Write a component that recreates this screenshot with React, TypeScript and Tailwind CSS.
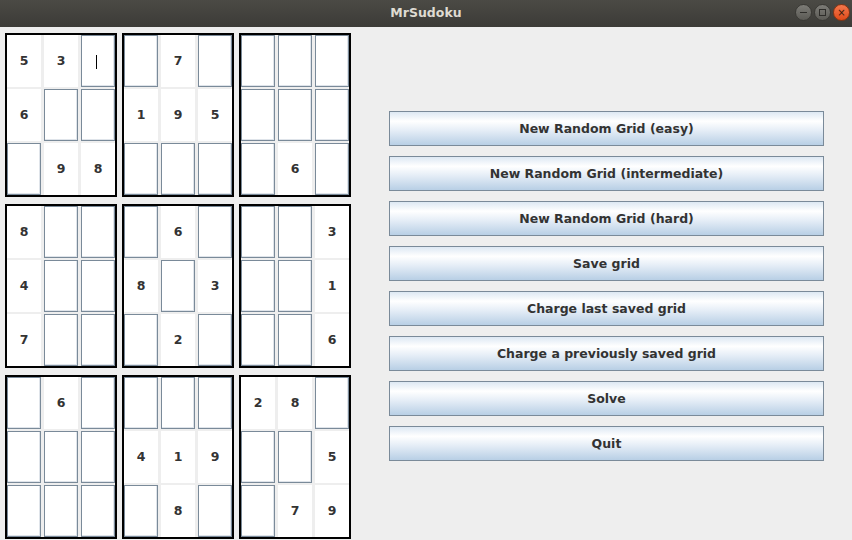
import React from "react";

type Cell = number | null | "caret";

const boxes: Cell[][] = [
  [5, 3, "caret", 6, null, null, null, 9, 8],
  [null, 7, null, 1, 9, 5, null, null, null],
  [null, null, null, null, null, null, null, 6, null],
  [8, null, null, 4, null, null, 7, null, null],
  [null, 6, null, 8, null, 3, null, 2, null],
  [null, null, 3, null, null, 1, null, null, 6],
  [null, 6, null, null, null, null, null, null, null],
  [null, null, null, 4, 1, 9, null, 8, null],
  [2, 8, null, null, null, 5, null, 7, 9],
];

const buttons = [
  "New Random Grid (easy)",
  "New Random Grid (intermediate)",
  "New Random Grid (hard)",
  "Save grid",
  "Charge last saved grid",
  "Charge a previously saved grid",
  "Solve",
  "Quit",
];

function CellView({ v }: { v: Cell }) {
  if (v === null || v === "caret") {
    return (
      <div className="relative bg-white border border-[#7a8a99] shadow-[inset_-1px_-1px_0_#dfe4ea]">
        {v === "caret" && (
          <div className="absolute left-[14px] top-[19px] w-px h-[14px] bg-black" />
        )}
      </div>
    );
  }
  return (
    <div className="bg-white flex items-center justify-center text-[12.5px] font-bold text-[#333333]">
      {v}
    </div>
  );
}

export default function App() {
  return (
    <div
      className="w-[852px] h-[540px] bg-[#eeeeee] flex flex-col overflow-hidden"
      style={{ fontFamily: '"DejaVu Sans", "Liberation Sans", sans-serif' }}
    >
      <div className="h-[27px] shrink-0 bg-gradient-to-b from-[#4b4a45] to-[#3c3b37] relative flex items-center justify-center">
        <span className="text-[12.5px] font-bold text-[#dfdbd2]">MrSudoku</span>
        <div className="absolute right-[2px] top-[4px] flex gap-[2px]">
          <div className="w-[17px] h-[17px] rounded-full bg-gradient-to-b from-[#7d7c77] to-[#5b5a55] border border-[#3a3935] flex items-center justify-center">
            <div className="w-[7px] h-px bg-[#2e2d2a]" />
          </div>
          <div className="w-[17px] h-[17px] rounded-full bg-gradient-to-b from-[#7d7c77] to-[#5b5a55] border border-[#3a3935] flex items-center justify-center">
            <div className="w-[7px] h-[7px] border border-[#2e2d2a]" />
          </div>
          <div className="w-[17px] h-[17px] rounded-full bg-gradient-to-b from-[#f4774b] to-[#df4a16] border border-[#8a3412] flex items-center justify-center text-[10px] leading-none text-[#3a1a0a]">
            ×
          </div>
        </div>
      </div>
      <div className="flex flex-1">
        <div className="pl-[5px] pt-[6px] grid grid-cols-[112px_112px_112px] grid-rows-[164px_164px_164px] gap-x-[5px] gap-y-[7px]">
          {boxes.map((b, i) => (
            <div
              key={i}
              className="border-2 border-black bg-[#eeeeee] grid grid-cols-3 grid-rows-3 gap-x-[3px] gap-y-[2px]"
            >
              {b.map((v, j) => (
                <CellView key={j} v={v} />
              ))}
            </div>
          ))}
        </div>
        <div className="ml-[38px] pt-[84px] flex flex-col gap-[10px]">
          {buttons.map((t) => (
            <div
              key={t}
              className="w-[435px] h-[35px] pt-[2px] border border-[#7a8a99] bg-[linear-gradient(to_bottom,#dde8f3_0%,#ffffff_28%,#e6eef7_55%,#b8cfe5_100%)] flex items-center justify-center text-[12.5px] font-bold text-[#333333]"
            >
              {t}
            </div>
          ))}
        </div>
      </div>
    </div>
  );
}
